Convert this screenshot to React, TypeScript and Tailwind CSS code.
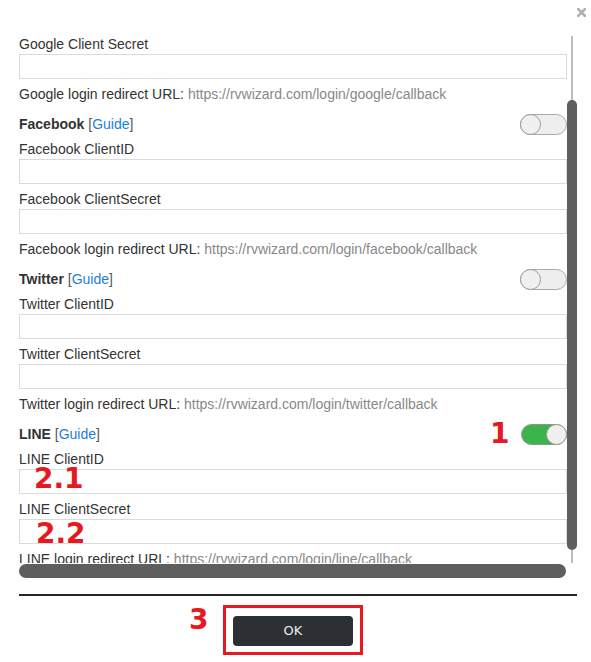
import type { ReactNode } from "react";

const providers = [
  { name: "Facebook", slug: "facebook", on: false },
  { name: "Twitter", slug: "twitter", on: false },
  { name: "LINE", slug: "line", on: true },
];

function Label({ children, className = "" }: { children: ReactNode; className?: string }) {
  return <div className={`h-5 leading-5 whitespace-nowrap ${className}`}>{children}</div>;
}

function TextInput() {
  return (
    <input
      type="text"
      className="block h-[25px] w-full border border-[#dadada] bg-white px-2 outline-none"
    />
  );
}

function RedirectUrl({ name, slug }: { name: string; slug: string }) {
  return (
    <Label className="mt-[5px]">
      {name} login redirect URL:{" "}
      <span className="text-[#888]">https://rvwizard.com/login/{slug}/callback</span>
    </Label>
  );
}

function Toggle({ on }: { on: boolean }) {
  return on ? (
    <div className="flex h-[21px] w-[46px] items-center justify-end rounded-full border border-[#8a9a8a] bg-[#3cb44b]">
      <div className="-mr-px h-[21px] w-[21px] rounded-full border border-[#999] bg-[#f0f0f0]" />
    </div>
  ) : (
    <div className="flex h-[21px] w-[47px] items-center rounded-full border border-[#aaa] bg-[#eeeeee]">
      <div className="-ml-px h-[21px] w-[21px] rounded-full border border-[#999] bg-[#f0f0f0]" />
    </div>
  );
}

function Mark({ children, className }: { children: ReactNode; className: string }) {
  return (
    <div
      className={`absolute font-['DejaVu_Sans',sans-serif] text-[28px] leading-none font-bold text-[#e8191e] ${className}`}
    >
      {children}
    </div>
  );
}

export default function App() {
  return (
    <div className="relative h-[662px] w-[591px] overflow-hidden bg-white font-['Liberation_Sans',Arial,sans-serif] text-[14px] text-[#333]">
      <button className="absolute top-[8px] left-[577px] text-[#b0b0b0]" aria-label="Close">
        <svg width="9" height="9" viewBox="0 0 9 9">
          <path d="M1 1L8 8M8 1L1 8" stroke="currentColor" strokeWidth="2.6" strokeLinecap="square" />
        </svg>
      </button>

      <div className="pt-[34px] pl-[19px]">
        <div className="flex">
          <div className="h-[529px] w-[548px] overflow-hidden">
            <Label>Google Client Secret</Label>
            <TextInput />
            <RedirectUrl name="Google" slug="google" />

            {providers.map((p) => (
              <div key={p.slug}>
                <div className="mt-[9px] flex h-[22px] items-center justify-between">
                  <span className="leading-5">
                    <b>{p.name}</b>{" "}
                    <span className="text-[#555]">
                      [<a className="text-[#1d7fd8]">Guide</a>]
                    </span>
                  </span>
                  <Toggle on={p.on} />
                </div>
                <Label className="mt-[4px]">{p.name} ClientID</Label>
                <TextInput />
                <Label className="mt-[5px]">{p.name} ClientSecret</Label>
                <TextInput />
                <RedirectUrl name={p.name} slug={p.slug} />
              </div>
            ))}
          </div>

          <div className="relative h-[529px] w-[10px]">
            <div className="absolute top-[2px] bottom-0 left-[4px] w-[2px] bg-[#bdbdbd]" />
            <div className="relative mt-[66px] h-[450px] w-[10px] rounded-full bg-[#5e5e5e]" />
          </div>
        </div>

        <div className="mt-px h-[14px] w-[547px] rounded-full bg-[#5e5e5e]" />

        <div className="mt-[16px] h-[2px] w-[558px] bg-[#262626]" />

        <div className="mt-[9px] ml-[204px] inline-block border-[3px] border-[#e8191e] px-[7px] pt-[8px] pb-[6px]">
          <button className="block h-[30px] w-[120px] rounded-[4px] bg-[#2c2f33] font-['DejaVu_Sans',sans-serif] text-[13px] text-[#eee]">
            OK
          </button>
        </div>
      </div>

      <Mark className="top-[420px] left-[490px]">1</Mark>
      <Mark className="top-[465px] left-[34px]">2.1</Mark>
      <Mark className="top-[520px] left-[36px]">2.2</Mark>
      <Mark className="top-[606px] left-[189px]">3</Mark>
    </div>
  );
}
